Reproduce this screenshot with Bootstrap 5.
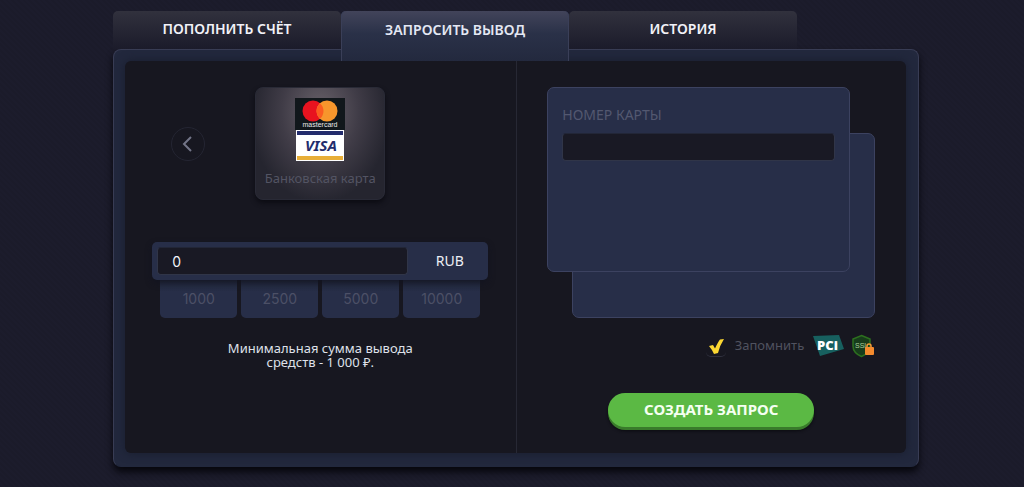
<!DOCTYPE html>
<html lang="ru">
<head>
<meta charset="utf-8">
<meta name="viewport" content="width=device-width, initial-scale=1">
<title>Запросить вывод</title>
<link href="https://cdn.jsdelivr.net/npm/bootstrap@5.3.0/dist/css/bootstrap.min.css" rel="stylesheet">
<style>
:root { --ink: #171720; --navy: #272e48; --edge: #3c4260; --dim: #4c5066; }
body {
  min-height: 100vh; padding: 11px 0 0 8px;
  font-family: "Noto Sans", "Open Sans", sans-serif; font-size: 14px; color: #eceef5;
  background: repeating-linear-gradient(45deg, #1b1b2a 0 2px, #1c1c2c 2px 4px);
}
.cashier { max-width: 806px; }
.tabs { width: 684px; max-width: 100%; }
.tabs .nav-link {
  height: 38px; padding: 0 0 2px; color: #f2f2f8; font-size: 14px; font-weight: 600; line-height: 20px;
  background: linear-gradient(#31313d, #1b1b2a); border: 0; border-radius: 5px 5px 0 0;
}
.tabs .nav-link.active {
  height: 50px; margin-bottom: -12px; padding-bottom: 12px; position: relative; color: #e4e8f4;
  background: linear-gradient(#42445a, #2a3148 45%, #23293e);
  box-shadow: inset 1px 0 #3a3f58, inset -1px 0 #3a3f58;
}
.frame {
  padding: 11px 12px 13px 11px; background: #22283d; border: 1px solid #383c54; border-bottom-color: #22283d;
  border-radius: 8px; box-shadow: 0 5px 7px #07070d;
}
.well { min-height: 392px; background: var(--ink); border-radius: 6px; box-shadow: 0 0 8px 1px #1a1f30; }
.half { padding-top: 26px; }
.half + .half { border-left: 1px solid #272834; }
.methods { gap: 50px; }
.prev { width: 34px; height: 34px; border: 1px solid #242532; color: #737587; background: none; }
.spacer { width: 34px; }
.method {
  width: 130px; height: 113px; padding: 10px 0 0; border: 1px solid #292a36; border-radius: 8px; color: #535463;
  background: radial-gradient(ellipse 70px 90px at 50% 22%, #69626a, #403c47 55%, #25252f);
  box-shadow: 0 3px 5px #0c0c13; font-size: 13px; line-height: 20px;
}
.method span { margin-top: 6px; }
.amount { width: 336px; height: 38px; margin-top: 42px; padding: 5px; background: var(--navy); border-radius: 5px; position: relative; z-index: 1; box-shadow: 0 3px 6px #11131fcc; }
.dark-field, .dark-field:focus { height: 28px; background: #191924; color: #f2f2f8; border: 1px solid #303548; border-top-color: #222637; border-radius: 4px; padding: 0 14px; font-size: 14px; box-shadow: none; }
.amount .dark-field { width: 251px; }
.amount .dark-field, .presets .btn { font-family: Inter, "Noto Sans", sans-serif; }
.currency { padding: 0 0 2px 8px; }
.presets { width: 320px; gap: 4px; }
.presets .btn { flex: 1 1 0; height: 38px; padding: 0 0 2px; background: linear-gradient(#22283d, var(--navy) 12px); color: var(--dim); border: 0; border-radius: 0 0 5px 5px; font-size: 14px; }
.hint { width: 210px; margin-top: 23px; font-size: 13px; line-height: 14px; color: #dfe1ea; }
.deck { width: 328px; }
.plate { grid-area: 1 / 1; height: 185px; background: var(--navy); border: 1px solid var(--edge); border-radius: 7px; }
.back { margin: 46px 0 0 25px; }
.front { margin: 0 25px 46px 0; padding: 17px 14px; z-index: 1; }
.front label { color: #535870; line-height: 20px; margin-bottom: 8px; }
.options { width: 328px; height: 24px; margin-top: 16px; }
.tick { appearance: none; width: 20px; height: 22px; margin: 0; border-bottom: 1px solid #30313e; border-radius: 5px; }
.tick-box { display: inline-grid; margin-right: 9px; }
.tick-box > * { grid-area: 1 / 1; }
.tick-box svg { display: none; pointer-events: none; }
.tick:checked + svg { display: block; }
.remember { color: #50525f; font-size: 13px; }
.pci { margin: 0 7px 0 9px; }
.submit, .submit:hover { width: 206px; height: 34px; margin-top: 35px; padding: 0 0 3px; background: #5bb944; color: #f5fff2; border: 0; border-radius: 18px; box-shadow: 0 3px #397b2b, 0 4px 3px #0b0b10; font-size: 15px; font-weight: 700; line-height: 20px; }
</style>
</head>
<body>
<main class="cashier mx-auto">
  <ul class="tabs nav nav-justified flex-nowrap" role="tablist">
    <li class="nav-item"><button class="nav-link w-100" type="button" role="tab">ПОПОЛНИТЬ СЧЁТ</button></li>
    <li class="nav-item"><button class="nav-link w-100 active" type="button" role="tab" aria-selected="true">ЗАПРОСИТЬ ВЫВОД</button></li>
    <li class="nav-item"><button class="nav-link w-100" type="button" role="tab">ИСТОРИЯ</button></li>
  </ul>
  <div class="frame">
    <form class="well row g-0">
      <section class="half col-6 d-flex flex-column align-items-center">
        <div class="methods d-flex align-items-center justify-content-center">
          <button class="prev btn rounded-circle p-0 d-flex align-items-center justify-content-center" type="button" aria-label="Назад">
            <svg width="14" height="18" viewBox="0 0 14 18" fill="none" stroke="currentColor" stroke-width="2"><path d="M10 2 3 9l7 7"/></svg>
          </button>
          <button class="method d-flex flex-column align-items-center" type="button">
            <svg width="50" height="64" viewBox="0 0 50 64" font-family="Liberation Sans, sans-serif">
              <path fill="#11171b" d="M0 0h50v32H0z"/>
              <circle cx="18" cy="13" r="10.5" fill="#e8131f"/><circle cx="32" cy="13" r="10.5" fill="#f7962c"/>
              <path d="M25 5.200a10.500 10.500 0 0 1 0 15.600 10.500 10.500 0 0 1 0-15.600z" fill="#fb5c20"/>
              <text x="25" y="29" font-size="7" fill="#e8e8ea" text-anchor="middle">mastercard</text>
              <path fill="#fff" d="M1 32h48v31H1z"/><path fill="#232c6c" d="M2 33h46v4H2z"/><path fill="#e8ae37" d="M2 58h46v4H2z"/>
              <text x="26" y="53" font-size="15" font-weight="700" font-style="italic" fill="#232c6c" text-anchor="middle" font-family="Noto Sans, sans-serif">VISA</text>
            </svg>
            <span>Банковская карта</span>
          </button>
          <span class="spacer"></span>
        </div>
        <div class="amount d-flex align-items-center">
          <input class="dark-field form-control" value="0" aria-label="Сумма">
          <span class="currency flex-fill text-center">RUB</span>
        </div>
        <div class="presets d-flex">
          <button class="btn" type="button">1000</button>
          <button class="btn" type="button">2500</button>
          <button class="btn" type="button">5000</button>
          <button class="btn" type="button">10000</button>
        </div>
        <p class="hint text-center mb-0">Минимальная сумма вывода средств - 1 000 ₽.</p>
      </section>
      <section class="half col-6 d-flex flex-column align-items-center">
        <div class="deck d-grid">
          <div class="plate back"></div>
          <div class="plate front">
            <label class="d-block" for="card-number">НОМЕР КАРТЫ</label>
            <input class="dark-field form-control" id="card-number" inputmode="numeric">
          </div>
        </div>
        <div class="options d-flex align-items-center justify-content-end">
          <span class="tick-box">
            <input class="tick" type="checkbox" id="remember" checked>
            <svg width="20" height="22" viewBox="0 0 20 22"><path fill="#fbd732" d="M3 11 7 10l2 3.500Q12 7 14 4.500L18 4q-4 6-6 14l-4 1q-2-4.500-5-8z"/></svg>
          </span>
          <label class="remember" for="remember">Запомнить</label>
          <svg class="pci" width="31" height="22" viewBox="0 0 31 22">
            <path fill="#17605f" d="M0 1 26 0l5 14-24 7z"/>
            <text x="4" y="15" font-family="Noto Sans, sans-serif" font-size="13" font-weight="900" fill="#fff">PCi</text>
          </svg>
          <svg width="24" height="24" viewBox="0 0 24 24">
            <path fill="#173c1b" stroke="#2d701f" stroke-width="1.500" d="M10.500 1.500 19 5v7q0 7-8.500 10.500Q2 19 2 12V5z"/>
            <text x="4" y="14" font-family="Liberation Sans, sans-serif" font-size="7" fill="#a8cf9c">SSL</text>
            <path fill="none" stroke="#f39a38" stroke-width="1.500" d="M16 14v-2q0-2 2-2t2 2v2"/><rect x="14" y="13" width="9" height="8" rx="1" fill="#f58b2e"/>
          </svg>
        </div>
        <button class="submit btn" type="submit">СОЗДАТЬ ЗАПРОС</button>
      </section>
    </form>
  </div>
</main>
<script src="https://cdn.jsdelivr.net/npm/bootstrap@5.3.0/dist/js/bootstrap.bundle.min.js"></script>
</body>
</html>
